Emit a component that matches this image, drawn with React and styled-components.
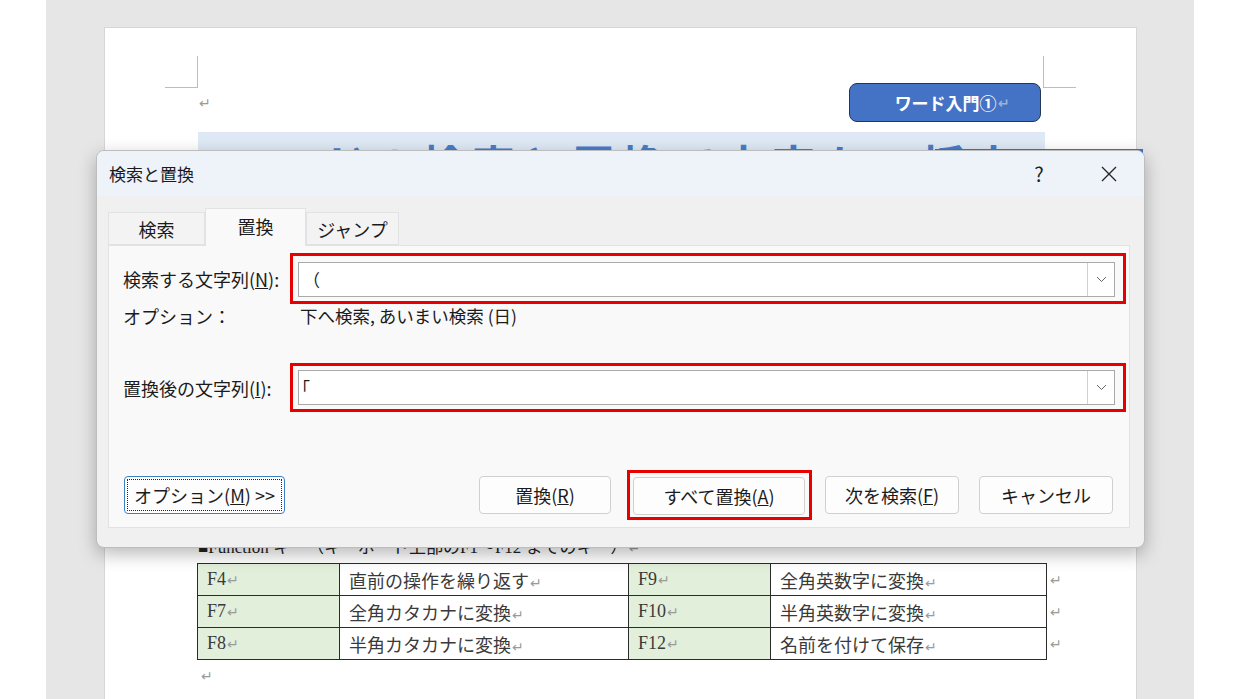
import React from 'react';
import styled, { createGlobalStyle } from 'styled-components';

const GlobalStyle = createGlobalStyle`
  html, body {
    margin: 0;
    padding: 0;
    background: #fff;
  }
  body {
    overflow: hidden;
  }
`;

const Desk = styled.div`
  position: relative;
  margin-left: 46px;
  width: 1148px;
  height: 699px;
  background: #e6e6e6;
  overflow: hidden;
`;

const Sheet = styled.div`
  position: relative;
  margin-left: 58px;
  margin-top: 27px;
  width: 1033px;
  height: 700px;
  box-sizing: border-box;
  background: #fff;
  border: 1px solid #d6d6d6;
  padding: 55px 91px 0 93px;
  font-family: "Liberation Serif", "Noto Sans CJK JP", serif;
  color: #333;
`;

const CropMark = styled.div`
  position: absolute;
  top: 28px;
  left: ${(p) => (p.$side === 'right' ? '938px' : '60px')};
  width: 32px;
  height: 31px;
  border-bottom: 1px solid #bdbdbd;
  ${(p) => (p.$side === 'right' ? 'border-left: 1px solid #bdbdbd;' : 'border-right: 1px solid #bdbdbd;')}
`;

const Mark = styled.span`
  font-family: "DejaVu Sans", sans-serif;
  font-size: 14px;
  color: ${(p) => p.$color || '#9a9a9a'};
  margin-left: 1px;
`;

const HeadRow = styled.div`
  display: flex;
  align-items: center;
  justify-content: space-between;
  height: 39px;
`;

const Badge = styled.div`
  width: 192px;
  height: 39px;
  margin-right: 4px;
  box-sizing: border-box;
  padding-left: 14px;
  display: flex;
  align-items: center;
  justify-content: center;
  background: #4472c4;
  border: 1.5px solid #243656;
  border-radius: 8px;
  color: #fff;
  font-family: "Noto Sans CJK JP", sans-serif;
  font-weight: 700;
  font-size: 17px;
`;

const Band = styled.div`
  margin-top: 10px;
  height: 60px;
  background: #dee9f5;
  overflow: hidden;
`;

const BandTitle = styled.div`
  padding-top: 10px;
  text-align: center;
  font-family: "Noto Sans CJK JP", sans-serif;
  font-weight: 700;
  font-size: 44px;
  line-height: 1;
  color: #4a7cc8;
  letter-spacing: 6px;
`;

const FunctionLine = styled.div`
  margin-top: 346px;
  font-size: 17px;
  line-height: 20px;
  color: #222;
`;

const KeyTable = styled.table`
  margin-top: 5px;
  margin-left: -1px;
  border-collapse: collapse;
  table-layout: fixed;
  width: 882px;
`;

const Cell = styled.td`
  height: 31px;
  padding: 0 0 0 9px;
  border: 1px solid #2b2b2b;
  background: ${(p) => (p.$key ? '#e2efda' : '#fff')};
  font-size: 18px;
  color: #3a3a3a;
  vertical-align: middle;
  white-space: nowrap;
  overflow: hidden;
`;

const EndCell = styled.td`
  padding: 0 0 0 2px;
  border: none;
`;

const TailLine = styled.div`
  margin-top: 7px;
  padding-left: 2px;
`;

const BehindShape = styled.div`
  position: absolute;
  left: 889px;
  top: 149px;
  width: 208px;
  height: 12px;
  background: #4472c4;
`;

const Dialog = styled.div`
  position: absolute;
  left: 50px;
  top: 150px;
  width: 1049px;
  height: 398px;
  box-sizing: border-box;
  display: flex;
  flex-direction: column;
  background: #f0f0f0;
  border: 1px solid #bdbdbd;
  border-radius: 8px;
  box-shadow: 0 6px 18px rgba(0, 0, 0, 0.28);
  overflow: hidden;
  font-family: "Noto Sans CJK JP", "Noto Sans", sans-serif;
  color: #1b1b1b;
`;

const TitleBar = styled.div`
  height: 45px;
  display: flex;
  align-items: center;
  padding-left: 12px;
  background: #eef2f9;
`;

const TitleText = styled.div`
  flex: 1;
  font-size: 17px;
`;

const CtrlButton = styled.div`
  width: 70px;
  height: 45px;
  display: flex;
  align-items: center;
  justify-content: center;
  font-size: 20px;
  color: #222;
`;

const Body = styled.div`
  flex: 1;
  padding: 12px 0 0 11px;
`;

const TabRow = styled.div`
  display: flex;
  align-items: flex-end;
  height: 37px;
`;

const Tab = styled.div`
  position: relative;
  z-index: ${(p) => (p.$active ? 2 : 1)};
  width: ${(p) => p.$w}px;
  height: ${(p) => (p.$active ? 38 : 33)}px;
  margin-bottom: ${(p) => (p.$active ? -1 : 0)}px;
  box-sizing: border-box;
  display: flex;
  align-items: center;
  justify-content: center;
  padding-bottom: ${(p) => (p.$active ? 3 : 0)}px;
  background: ${(p) => (p.$active ? '#f9f9f9' : '#f3f3f3')};
  border: 1px solid #e2e2e2;
  border-bottom: ${(p) => (p.$active ? 'none' : '1px solid #e2e2e2')};
  font-size: 18px;
`;

const Panel = styled.div`
  position: relative;
  width: 1022px;
  height: 283px;
  box-sizing: border-box;
  padding: 7px 3px 0 14px;
  background: #f9f9f9;
  border: 1px solid #e2e2e2;
`;

const FieldRow = styled.div`
  display: flex;
  align-items: center;
  margin-top: ${(p) => p.$top || 0}px;
`;

const Label = styled.div`
  width: ${(p) => p.$w}px;
  flex-shrink: 0;
  font-size: 18px;
  line-height: 20px;
  white-space: nowrap;
`;

const RedFrame = styled.div`
  flex: ${(p) => (p.$fill ? 1 : 'none')};
  border: 3px solid #e60000;
  padding: ${(p) => p.$pad};
  margin-left: ${(p) => p.$ml || 0}px;
`;

const Combo = styled.div`
  height: 35px;
  box-sizing: border-box;
  display: flex;
  background: #fff;
  border: 1px solid #a9a9a9;
`;

const ComboText = styled.div`
  flex: 1;
  display: flex;
  align-items: center;
  font-size: 17px;
`;

const Entry = styled.span`
  margin-left: ${(p) => p.$shift}px;
`;

const DropButton = styled.div`
  width: 26px;
  display: flex;
  align-items: center;
  justify-content: center;
  border-left: 1px solid #d2d2d2;
`;

const Value = styled.div`
  font-size: 17.5px;
  line-height: 20px;
`;

const ButtonRow = styled.div`
  display: flex;
  align-items: center;
  margin-top: 58px;
  padding: 0 13px 0 1px;
`;

const Spacer = styled.div`
  flex: 1;
`;

const DialogButton = styled.div`
  width: ${(p) => p.$w}px;
  height: 38px;
  box-sizing: border-box;
  margin-left: ${(p) => p.$ml || 0}px;
  display: flex;
  align-items: center;
  justify-content: center;
  background: #fdfdfd;
  border: 1px solid ${(p) => (p.$focus ? '#3d7fc6' : '#d0d0d0')};
  border-radius: 4px;
  font-size: 18px;
  color: #1b1b1b;
  white-space: nowrap;
  ${(p) => p.$focus && 'outline: 1px dotted #222; outline-offset: -4px;'}
`;

const Chevron = () => (
  <svg width="11" height="7" viewBox="0 0 11 7">
    <path d="M1 1 L5.5 5.5 L10 1" fill="none" stroke="#666" strokeWidth="1" />
  </svg>
);

const CloseIcon = () => (
  <svg width="16" height="16" viewBox="0 0 16 16">
    <path d="M1 1 L15 15 M15 1 L1 15" stroke="#222" strokeWidth="1.3" />
  </svg>
);

const rows = [
  ['F4', '直前の操作を繰り返す', 'F9', '全角英数字に変換'],
  ['F7', '全角カタカナに変換', 'F10', '半角英数字に変換'],
  ['F8', '半角カタカナに変換', 'F12', '名前を付けて保存'],
];

const widths = [142, 289, 142, 276, 33];

export default function App() {
  return (
    <>
      <GlobalStyle />
      <Desk>
        <Sheet>
          <CropMark />
          <CropMark $side="right" />
          <HeadRow>
            <Mark>↵</Mark>
            <Badge>
              ワード入門①<Mark $color="#9fb2d6">↵</Mark>
            </Badge>
          </HeadRow>
          <Band>
            <BandTitle>ワードの検索と置換で文字を一括変更</BandTitle>
          </Band>
          <FunctionLine>
            ■Function キー（キーボード上部のF1～F12 までのキー）<Mark>↵</Mark>
          </FunctionLine>
          <KeyTable>
            <colgroup>
              {widths.map((w, i) => (
                <col key={i} style={{ width: w }} />
              ))}
            </colgroup>
            <tbody>
              {rows.map((row) => (
                <tr key={row[0]}>
                  {row.map((text, i) => (
                    <Cell key={i} $key={i % 2 === 0}>
                      {text}
                      <Mark>↵</Mark>
                    </Cell>
                  ))}
                  <EndCell>
                    <Mark>↵</Mark>
                  </EndCell>
                </tr>
              ))}
            </tbody>
          </KeyTable>
          <TailLine>
            <Mark>↵</Mark>
          </TailLine>
        </Sheet>

        <BehindShape />

        <Dialog>
          <TitleBar>
            <TitleText>検索と置換</TitleText>
            <CtrlButton>?</CtrlButton>
            <CtrlButton>
              <CloseIcon />
            </CtrlButton>
          </TitleBar>
          <Body>
            <TabRow>
              <Tab $w={97}>検索</Tab>
              <Tab $w={101} $active>置換</Tab>
              <Tab $w={93}>ジャンプ</Tab>
            </TabRow>
            <Panel>
              <FieldRow>
                <Label $w={167}>
                  検索する文字列(<u>N</u>):
                </Label>
                <RedFrame $fill $pad="6px 8px 4px 5px">
                  <Combo>
                    <ComboText>
                      <Entry $shift={4}>（</Entry>
                    </ComboText>
                    <DropButton>
                      <Chevron />
                    </DropButton>
                  </Combo>
                </RedFrame>
              </FieldRow>
              <FieldRow $top={2}>
                <Label $w={177}>オプション：</Label>
                <Value>下へ検索, あいまい検索 (日)</Value>
              </FieldRow>
              <FieldRow $top={37}>
                <Label $w={167}>
                  置換後の文字列(<u>I</u>):
                </Label>
                <RedFrame $fill $pad="4px 8px 4px 5px">
                  <Combo>
                    <ComboText>
                      <Entry $shift={-6}>「</Entry>
                    </ComboText>
                    <DropButton>
                      <Chevron />
                    </DropButton>
                  </Combo>
                </RedFrame>
              </FieldRow>
              <ButtonRow>
                <DialogButton $w={161} $focus>
                  オプション(<u>M</u>) &gt;&gt;
                </DialogButton>
                <Spacer />
                <DialogButton $w={132}>
                  置換(<u>R</u>)
                </DialogButton>
                <RedFrame $ml={16} $pad="4px 4px 2px 3px">
                  <DialogButton $w={172}>
                    すべて置換(<u>A</u>)
                  </DialogButton>
                </RedFrame>
                <DialogButton $w={134} $ml={13}>
                  次を検索(<u>F</u>)
                </DialogButton>
                <DialogButton $w={134} $ml={20}>
                  キャンセル
                </DialogButton>
              </ButtonRow>
            </Panel>
          </Body>
        </Dialog>
      </Desk>
    </>
  );
}
